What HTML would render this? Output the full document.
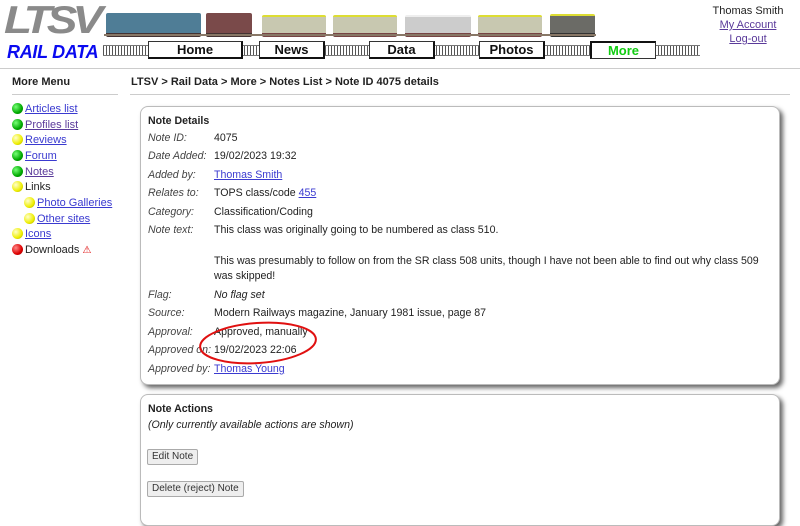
<!DOCTYPE html>
<html><head><style>
body{margin:0;width:800px;height:509px;overflow:hidden;background:#fff;font-family:"Liberation Sans",Arial,sans-serif;font-size:10.6px;color:#222;position:relative}
.a{position:absolute}
a{color:#3a3ad0;text-decoration:underline}
.btn{position:absolute;top:41px;height:15px;background:#fff;border:1px solid #333;border-right:2px solid #111;border-bottom:2px solid #111;font-weight:bold;font-size:13px;text-align:center;line-height:15px;color:#111}
.track{position:absolute;top:45px;height:9px;background:repeating-linear-gradient(90deg,#555 0 1px,#fff 1px 3px);border-top:1px solid #777;border-bottom:1px solid #777}
.dot{display:inline-block;width:11px;height:11px;border-radius:50%;margin-right:2px;vertical-align:-2px}
.g{background:radial-gradient(circle at 35% 35%,#7f7,#0a0 60%,#060)}
.y{background:radial-gradient(circle at 35% 35%,#ffc,#ee0 60%,#990)}
.r{background:radial-gradient(circle at 35% 35%,#f88,#d00 60%,#800)}
.menu div{position:absolute;left:12px;height:15px;line-height:15px;font-size:11px}
.box{position:absolute;left:140px;width:638px;border:1px solid #bbb;border-radius:8px;box-shadow:3px 3px 5px #666;background:#fff}
.row{position:absolute;left:148px;line-height:14px}
.row i{color:#444;position:absolute;left:0;width:66px;white-space:nowrap}
.row span{position:absolute;left:66px;white-space:nowrap}
.b{position:absolute;left:147px;height:14px;border:1px solid #aaa;background:#eee;font-size:10px;line-height:14px;padding:0 4px;color:#333;border-radius:2px}
.car{position:absolute;top:14px;height:20px;border-radius:2px}
</style></head><body>
<div class="a" style="left:4px;top:0px;font:bold italic 46px 'Liberation Sans';color:#8a8a8a;letter-spacing:-5px;line-height:46px;transform:scaleY(0.85);transform-origin:top left">LTSV</div>
<div class="a" style="left:7px;top:41px;font:bold italic 18px 'Liberation Sans';color:#0a0af0;line-height:22px;letter-spacing:-0.3px">RAIL DATA</div>
<!-- trains -->
<div class="car" style="left:106px;width:95px;background:#4f7d96;border-bottom:4px solid #433;top:13px"></div>
<div class="car" style="left:206px;width:46px;background:#7a4a4a;border-bottom:4px solid #433;top:13px"></div>
<div class="car" style="left:262px;width:64px;background:#c8c8b0;border-top:2px solid #dd3;border-bottom:4px solid #744;top:15px;height:16px"></div>
<div class="car" style="left:333px;width:64px;background:#c8c8b0;border-top:2px solid #dd3;border-bottom:4px solid #744;top:15px;height:16px"></div>
<div class="car" style="left:405px;width:66px;background:#ccc;border-top:2px solid #eee;border-bottom:4px solid #744;top:15px;height:16px"></div>
<div class="car" style="left:478px;width:64px;background:#c8c8b0;border-top:2px solid #dd3;border-bottom:4px solid #744;top:15px;height:16px"></div>
<div class="car" style="left:550px;width:45px;background:#6b6b66;border-top:2px solid #dd3;border-bottom:4px solid #333;top:14px;height:17px"></div>
<div class="a" style="left:104px;top:34px;width:492px;height:2px;background:#876"></div>
<div class="track" style="left:103px;width:597px"></div>
<div class="btn" style="left:148px;width:92px">Home</div>
<div class="btn" style="left:259px;width:63px">News</div>
<div class="btn" style="left:369px;width:63px">Data</div>
<div class="btn" style="left:479px;width:63px">Photos</div>
<div class="btn" style="left:590px;width:63px;color:#1c1;border-right:1px solid #333;border-bottom:1px solid #333;border-left:2px solid #111;border-top:2px solid #111">More</div>
<div class="a" style="left:700px;top:4px;width:96px;text-align:center;line-height:14px;font-size:11px">Thomas Smith<br><a style="color:#5a3a9a">My Account</a><br><a style="color:#5a3a9a">Log-out</a></div>
<div class="a" style="left:0;top:68px;width:800px;height:1px;background:#ccc"></div>
<div class="a" style="left:12px;top:76px;font-weight:bold;font-size:11px">More Menu</div>
<div class="a" style="left:12px;top:94px;width:106px;height:1px;background:#ccc"></div>
<div class="a" style="left:131px;top:76px;font-weight:bold;font-size:11px">LTSV &gt; Rail Data &gt; More &gt; Notes List &gt; Note ID 4075 details</div>
<div class="a" style="left:130px;top:94px;width:660px;height:1px;background:#ccc"></div>
<div class="menu">
<div style="top:102px"><span class="dot g"></span><a>Articles list</a></div>
<div style="top:118px"><span class="dot g"></span><a style="color:#5a3a9a">Profiles list</a></div>
<div style="top:133px"><span class="dot y"></span><a>Reviews</a></div>
<div style="top:149px"><span class="dot g"></span><a>Forum</a></div>
<div style="top:165px"><span class="dot g"></span><a style="color:#5a3a9a">Notes</a></div>
<div style="top:180px"><span class="dot y"></span>Links</div>
<div style="top:196px;left:24px"><span class="dot y"></span><a>Photo Galleries</a></div>
<div style="top:212px;left:24px"><span class="dot y"></span><a>Other sites</a></div>
<div style="top:227px"><span class="dot y"></span><a>Icons</a></div>
<div style="top:243px"><span class="dot r"></span>Downloads <span style="color:#d00;font-size:10px">⚠</span></div>
</div>
<div class="box" style="top:106px;height:277px"></div>
<div class="a" style="left:148px;top:115px;font-weight:bold">Note Details</div>
<div class="row" style="top:131px"><i>Note ID:</i><span>4075</span></div>
<div class="row" style="top:149px"><i>Date Added:</i><span>19/02/2023 19:32</span></div>
<div class="row" style="top:168px"><i>Added by:</i><span><a>Thomas Smith</a></span></div>
<div class="row" style="top:186px"><i>Relates to:</i><span>TOPS class/code <a>455</a></span></div>
<div class="row" style="top:205px"><i>Category:</i><span>Classification/Coding</span></div>
<div class="row" style="top:223px"><i>Note text:</i><span>This class was originally going to be numbered as class 510.</span></div>
<div class="row" style="top:254px"><span>This was presumably to follow on from the SR class 508 units, though I have not been able to find out why class 509</span></div>
<div class="row" style="top:269px"><span>was skipped!</span></div>
<div class="row" style="top:288px"><i>Flag:</i><span><i style="position:static;color:#222">No flag set</i></span></div>
<div class="row" style="top:306px"><i>Source:</i><span>Modern Railways magazine, January 1981 issue, page 87</span></div>
<div class="row" style="top:325px"><i>Approval:</i><span>Approved, manually</span></div>
<div class="row" style="top:343px"><i>Approved on:</i><span>19/02/2023 22:06</span></div>
<div class="row" style="top:362px"><i>Approved by:</i><span><a>Thomas Young</a></span></div>
<svg class="a" style="left:190px;top:315px" width="140" height="60"><ellipse cx="68" cy="28" rx="58" ry="20" transform="rotate(-4 68 28)" fill="none" stroke="#e01010" stroke-width="2"/></svg>
<div class="box" style="top:394px;height:130px"></div>
<div class="a" style="left:148px;top:403px;font-weight:bold">Note Actions</div>
<div class="a" style="left:148px;top:419px;font-style:italic">(Only currently available actions are shown)</div>
<div class="b" style="top:449px">Edit Note</div>
<div class="b" style="top:481px">Delete (reject) Note</div>
</body></html>
